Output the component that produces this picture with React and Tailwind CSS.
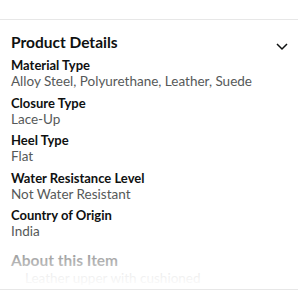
import React from "react";

const rows = [
  ["Material Type", "Alloy Steel, Polyurethane, Leather, Suede"],
  ["Closure Type", "Lace-Up"],
  ["Heel Type", "Flat"],
  ["Water Resistance Level", "Not Water Resistant"],
  ["Country of Origin", "India"],
];

export default function App() {
  return (
    <div className="w-[298px] h-[300px] bg-white overflow-hidden" style={{ fontFamily: 'Lato, sans-serif' }}>
      <div className="h-[19px]" />
      <div className="border-t border-b border-[#e7e7e7] h-[271px] overflow-hidden relative">
        <div className="flex items-start justify-between pl-[11px] pr-[9px] pt-[12px]">
          <h2 className="text-[15.5px] font-bold text-[#0f1111] leading-[20px]">Product Details</h2>
          <svg width="14" height="10" viewBox="0 0 14 10" className="mt-[9px]">
            <path d="M2 3 L7 8 L12 3" fill="none" stroke="#0f1111" strokeWidth="1.5" />
          </svg>
        </div>
        <div className="pl-[11px] pt-[5px] flex flex-col gap-[4.5px]">
          {rows.map(([k, v]) => (
            <div key={k} className="flex flex-col">
              <div className="text-[13px] font-bold text-[#0f1111] leading-[16px]">{k}</div>
              <div className="text-[13.5px] text-[#565959] leading-[17px]">{v}</div>
            </div>
          ))}
        </div>
        <div className="pl-[11px] pt-[10px]">
          <h2 className="text-[15.5px] font-bold text-[#0f1111] leading-[20px]">About this Item</h2>
          <div className="text-[13.5px] text-[#a0a0a0] leading-[17px] whitespace-nowrap pl-[14px]">Leather upper with cushioned</div>
        </div>
        <div className="absolute left-0 right-0 bottom-0 h-[42px] bg-gradient-to-b from-white/50 to-white" />
      </div>
    </div>
  );
}
